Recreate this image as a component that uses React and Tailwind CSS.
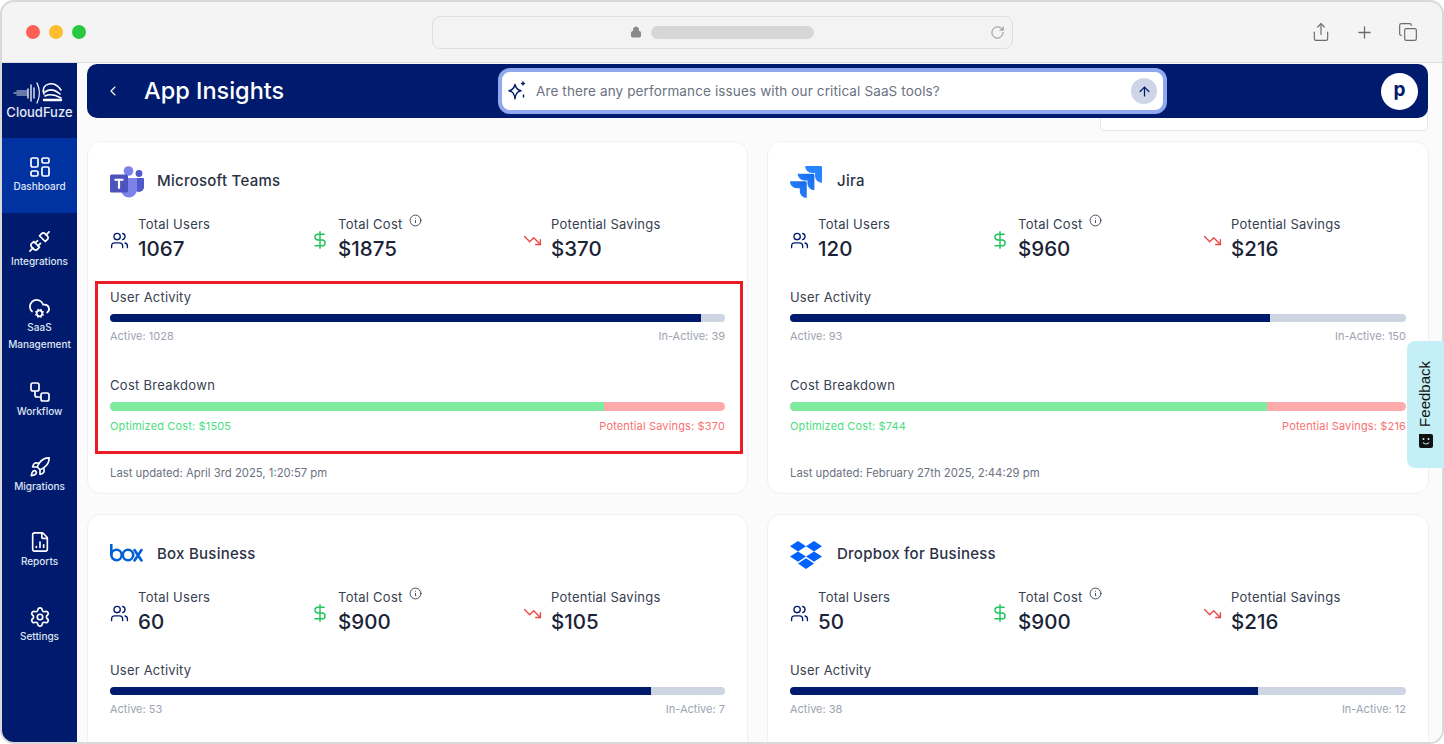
import React from "react";
import { ChevronLeft, Users, DollarSign, TrendingDown, Info, Unplug, CloudCog, Rocket, FileChartColumn, Settings, ArrowUp, Lock, RotateCw, Share, Plus, Copy } from "lucide-react";

const font = { fontFamily: "Inter, 'Liberation Sans', sans-serif" };

const DashIcon = () => (
  <svg width="22" height="22" viewBox="0 0 22 22" fill="none" stroke="currentColor" strokeWidth="1.7">
    <rect x="2" y="2" width="7" height="9" rx="1.6" />
    <rect x="13" y="2" width="7" height="5" rx="1.6" />
    <rect x="2" y="15" width="7" height="5" rx="1.6" />
    <rect x="13" y="11" width="7" height="9" rx="1.6" />
  </svg>
);

const WorkflowIcon = () => (
  <svg width="22" height="22" viewBox="0 0 22 22" fill="none" stroke="currentColor" strokeWidth="1.7">
    <rect x="2" y="2" width="8" height="8" rx="2" />
    <rect x="12" y="12" width="8" height="8" rx="2" />
    <path d="M6 10v4a2 2 0 0 0 2 2h4" />
  </svg>
);

const TeamsLogo = () => (
  <svg width="34" height="32" viewBox="0 0 34 32">
    <circle cx="29" cy="7.5" r="3.4" fill="#5059c9" />
    <path d="M23 12h10a1 1 0 0 1 1 1v8a5 5 0 0 1-5 5 6 6 0 0 1-6-6z" fill="#5059c9" />
    <circle cx="18.500" cy="5" r="4.800" fill="#7b83eb" />
    <path d="M11 12h15a1 1 0 0 1 1 1v10a8 8 0 0 1-16 1z" fill="#7b83eb" />
    <rect x="0" y="8.500" width="18" height="18" rx="1.500" fill="#4b53bc" />
    <path d="M4.500 12.800h9v2h-3.400v8h-2.200v-8h-3.400z" fill="#fff" />
  </svg>
);

const JiraLogo = () => (
  <svg width="32" height="32" viewBox="2 2 20 20">
    <defs>
      <linearGradient id="jiraFill" x1="1" y1="0" x2="0" y2="1">
        <stop offset="0" stopColor="#1668ec" />
        <stop offset="1" stopColor="#2f8bff" />
      </linearGradient>
    </defs>
    <path fill="#2684ff" d="M11.530 2c0 2.400 1.970 4.350 4.350 4.350h1.780v1.700c0 2.400 1.940 4.340 4.340 4.350V2.840a.84.84 0 0 0-.84-.84H11.530z" />
    <path fill="url(#jiraFill)" d="M6.770 6.800a4.362 4.362 0 0 0 4.340 4.340h1.800v1.720a4.362 4.362 0 0 0 4.340 4.340V7.630a.84.84 0 0 0-.83-.83H6.770z" />
    <path fill="url(#jiraFill)" d="M2 11.600c0 2.400 1.950 4.340 4.350 4.340h1.780v1.720c.01 2.390 1.950 4.340 4.340 4.340v-9.570a.84.84 0 0 0-.84-.84L2 11.600z" />
  </svg>
);

const BoxLogo = () => (
  <svg width="33" height="18" viewBox="0 0 33 18" className="mt-[-3px]" fill="none" stroke="#0061d5" strokeWidth="2.600">
    <path d="M1.300 0v11" />
    <circle cx="6.500" cy="11" r="5.200" />
    <circle cx="18" cy="11" r="5.200" />
    <path d="M24.500 6l7 10.500M31.500 6l-7 10.500" strokeLinecap="round" />
  </svg>
);

const DropboxLogo = () => (
  <svg width="32" height="28" viewBox="0 0 32 28" fill="#0061ff">
    <path d="M8 0l8 5.200-8 5.200-8-5.200zM24 0l8 5.200-8 5.200-8-5.200zM0 15.600l8-5.200 8 5.200-8 5.200zM24 10.400l8 5.200-8 5.200-8-5.200zM8 22.500l8-5.200 8 5.200-8 5.500z" />
  </svg>
);

const CloudFuzeMark = () => (
  <svg width="50" height="22" viewBox="0 0 50 22" className="mr-[3px]" fill="none" stroke="#fff" strokeWidth="1.300" strokeLinecap="round">
    <path d="M1 11h13M4 9h10M4 13h10" opacity=".55" />
    <path d="M15 7v9M18 3v16M21 6v10M24 1c3 6 3 14 0 20" />
    <path d="M31 12c-2-5 0-9 5-10 4-1 9 1 12 6" strokeWidth="1.600" />
    <path d="M32 10c4-3 9-3 15 2M32 14c4-2 9-2 16 2" strokeWidth="1.600" />
    <path d="M31 18h17" strokeWidth="2.400" />
  </svg>
);

const Sparkle = () => (
  <svg width="20" height="20" viewBox="0 0 20 20" fill="none" stroke="#001b6d" strokeWidth="1.400" strokeLinejoin="round">
    <path d="M8 3.500c.8 3.800 2.200 5.300 6 6.300-3.800 1-5.200 2.500-6 8-.8-5.500-2.200-7-6-8 3.800-1 5.200-2.500 6-6.300z" />
    <path d="M16 1v3M14.500 2.500h3M16.500 14v2" strokeLinecap="round" />
  </svg>
);

const navItems = [
  { label: ["Dashboard"], icon: <DashIcon />, active: true },
  { label: ["Integrations"], icon: <Unplug size={23} strokeWidth={1.8} /> },
  { label: ["SaaS", "Management"], icon: <CloudCog size={23} strokeWidth={1.8} /> },
  { label: ["Workflow"], icon: <WorkflowIcon /> },
  { label: ["Migrations"], icon: <Rocket size={22} strokeWidth={1.8} /> },
  { label: ["Reports"], icon: <FileChartColumn size={22} strokeWidth={1.8} /> },
  { label: ["Settings"], icon: <Settings size={22} strokeWidth={1.8} /> },
];

// the two lower cards run off the bottom of the window, only their top part is filled in
const apps = [
  { name: "Microsoft Teams", logo: <TeamsLogo />, users: 1067, cost: "$1875", savings: "$370", active: 1028, inactive: 39, activePct: 96.1, optimized: "$1505", costPct: 80.3, updated: "April 3rd 2025, 1:20:57 pm", marked: true },
  { name: "Jira", logo: <JiraLogo />, users: 120, cost: "$960", savings: "$216", active: 93, inactive: 150, activePct: 78, optimized: "$744", costPct: 77.5, updated: "February 27th 2025, 2:44:29 pm" },
  { name: "Box Business", logo: <BoxLogo />, users: 60, cost: "$900", savings: "$105", active: 53, inactive: 7, activePct: 88 },
  { name: "Dropbox for Business", logo: <DropboxLogo />, users: 50, cost: "$900", savings: "$216", active: 38, inactive: 12, activePct: 76 },
];

const Stat = ({ icon, label, value, info }) => (
  <div className="flex items-center">
    <div className="w-[28px] flex items-center">{icon}</div>
    <div>
      <div className="flex items-start gap-[6px] text-[13px] leading-[18px] text-[#374151] tracking-[0.25px]">
        {label}
        {info && <Info size={13} strokeWidth={1.5} className="text-[#1f2937] mt-[-1px]" />}
      </div>
      <div className="text-[20.500px] leading-[32px] font-medium text-[#1b2336]">{value}</div>
    </div>
  </div>
);

const AppCard = ({ app }) => (
  <div className="relative h-[353px] shrink-0 rounded-[14px] border border-[#f0f0f3] bg-white pl-[22px] pr-[22px] pt-[23px]">
    <div className="flex items-center h-[33px]">
      <div className="w-[47px] flex items-center">{app.logo}</div>
      <div className="text-[15px] font-medium text-[#2b3245] tracking-[0.25px]">{app.name}</div>
    </div>
    <div className="grid grid-cols-[200px_213px_1fr] mt-[17px] h-[50px]">
      <Stat icon={<Users size={19} strokeWidth={1.7} className="text-[#001b6d]" />} label="Total Users" value={app.users} />
      <div className="flex">
        <Stat icon={<DollarSign size={20} strokeWidth={1.8} className="text-[#22c55e]" />} label="Total Cost" value={app.cost} info />
      </div>
      <Stat icon={<TrendingDown size={19} strokeWidth={1.7} className="text-[#ef4444]" />} label="Potential Savings" value={app.savings} />
    </div>

    <div className="mt-[23px] text-[13px] leading-[18px] text-[#374151] tracking-[0.2px]">User Activity</div>
    <div className="flex h-[8px] mt-[8px] rounded-full overflow-hidden bg-[#cdd5e3]">
      <div className="bg-[#001b6d]" style={{ width: app.activePct + "%" }} />
    </div>
    <div className="flex justify-between mt-[6px] text-[11px] leading-[16px] text-[#9ca3af]">
      <span>Active: {app.active}</span>
      <span>In-Active: {app.inactive}</span>
    </div>

    {app.optimized && (
      <>
        <div className="mt-[32px] text-[13px] leading-[18px] text-[#374151] tracking-[0.3px]">Cost Breakdown</div>
        <div className="flex h-[9px] mt-[8px] rounded-full overflow-hidden bg-[#fdaaaa]">
          <div className="bg-[#7eeb9f]" style={{ width: app.costPct + "%" }} />
        </div>
        <div className="flex justify-between mt-[7px] text-[11px] leading-[16px] tracking-[0.15px]">
          <span className="text-[#4ade80]">Optimized Cost: {app.optimized}</span>
          <span className="text-[#f87171]">Potential Savings: {app.savings}</span>
        </div>
        <div className="mt-[31px] text-[11.300px] leading-[16px] text-[#6b7280]">Last updated: {app.updated}</div>
      </>
    )}

    {app.marked && (
      <div className="absolute left-[7px] right-[4px] top-[139px] h-[173px] border-[3px] border-[#ed1c24] pointer-events-none" />
    )}
  </div>
);

export default function App() {
  return (
    <div style={font} className="relative h-[744px] w-[1444px] overflow-hidden bg-white">
      <div className="flex h-[744px] flex-col overflow-hidden rounded-[14px] border-2 border-[#d9d9d9] bg-[#f4f4f4]">
        {/* browser bar */}
        <div className="relative flex h-[61px] shrink-0 items-center border-b border-[#dcdcdc]">
          <div className="ml-[24px] flex gap-[9px]">
            <span className="h-[14px] w-[14px] rounded-full bg-[#ff5f57]" />
            <span className="h-[14px] w-[14px] rounded-full bg-[#febc2e]" />
            <span className="h-[14px] w-[14px] rounded-full bg-[#28c840]" />
          </div>
          <div className="ml-[346px] flex h-[33px] w-[581px] items-center rounded-[8px] border border-[#dedede] bg-[#f3f3f3] pl-[197px] pr-[7px]">
            <Lock size={12} className="text-[#8a8a8a]" fill="#8a8a8a" />
            <div className="ml-[9px] h-[13px] w-[163px] rounded-full bg-[#d6d6d6]" />
            <RotateCw size={15} strokeWidth={1.2} className="ml-auto text-[#6b6b6b]" />
          </div>
          <div className="ml-auto mr-[24px] flex items-center gap-[24px] text-[#6b6b6b]">
            <Share size={20} strokeWidth={1.4} />
            <Plus size={19} strokeWidth={1.6} />
            <Copy size={20} strokeWidth={1.4} />
          </div>
        </div>

        <div className="flex min-h-0 flex-1">
          {/* sidebar */}
          <div className="w-[75px] shrink-0 bg-[#001b6d] text-white">
            <div className="flex h-[75px] flex-col items-center justify-center pt-[1px]">
              <CloudFuzeMark />
              <div className="mt-[1px] text-[13px] leading-[15px] font-medium text-[#e5e9f5]">CloudFuze</div>
            </div>
            {navItems.map((item) => (
              <div key={item.label[0]} className={`flex h-[75px] flex-col items-center justify-center pb-[2px] ${item.active ? "bg-[#0033a1]" : ""}`}>
                <div className="flex h-[24px] items-center">{item.icon}</div>
                <div className="mt-[-1px] text-center text-[10px] leading-[17px] font-medium text-[#dfe4f2]">
                  {item.label.map((l) => (
                    <div key={l}>{l}</div>
                  ))}
                </div>
              </div>
            ))}
          </div>

          {/* main */}
          <div className="relative min-w-0 flex-1 overflow-hidden bg-[#fbfbfc] pl-[10px] pr-[13px] pt-[1px]">
            <div className="absolute right-[14px] top-[40px] h-[28px] w-[328px] rounded-b-[4px] border border-[#e5e7eb] bg-white" />
            <div className="relative mr-[1px] flex h-[54px] items-center rounded-[10px] bg-[#001b6d] text-white">
              <ChevronLeft size={16} strokeWidth={1.6} className="ml-[18px]" />
              <div className="ml-[23px] w-[354px] text-[23.500px] font-medium">App Insights</div>
              <div className="flex h-[46px] w-[669px] items-center rounded-[12px] border-[4px] border-[#8fa8ee] bg-white pl-[5px] pr-[6px]">
                <Sparkle />
                <span className="ml-[9px] text-[13.500px] tracking-[0.13px] text-[#6b7280]">Are there any performance issues with our critical SaaS tools?</span>
                <div className="ml-auto flex h-[26px] w-[26px] items-center justify-center rounded-full bg-[#cdd5e6]">
                  <ArrowUp size={15} strokeWidth={2} className="text-[#001b6d]" />
                </div>
              </div>
              <div className="ml-auto mr-[10px] flex h-[37px] w-[37px] items-center justify-center rounded-full bg-white pb-[1px] text-[19px] font-bold text-[#001b6d]">p</div>
            </div>

            <div className="relative mt-[23px] grid grid-cols-[661px_662px] gap-x-[19px] gap-y-[20px]">
              {apps.map((app) => (
                <AppCard key={app.name} app={app} />
              ))}
            </div>
          </div>
        </div>
      </div>

      {/* feedback tab */}
      <div className="absolute right-0 top-[341px] flex h-[127px] w-[37px] flex-col items-center justify-center gap-[8px] rounded-l-[8px] bg-[#c4eff6]">
        <span style={{ fontFamily: "'Liberation Sans', sans-serif" }} className="rotate-180 text-[15px] text-[#111] [writing-mode:vertical-rl]">Feedback</span>
        <svg width="14" height="14" viewBox="0 0 14 14">
          <path d="M0 0h12a2 2 0 0 1 2 2v10a2 2 0 0 1-2 2H2a2 2 0 0 1-2-2z" fill="#111" />
          <circle cx="4.500" cy="5" r="1" fill="#c4eff6" />
          <circle cx="9.500" cy="5" r="1" fill="#c4eff6" />
          <path d="M4 8.500c1.500 2 4.500 2 6 0" fill="none" stroke="#c4eff6" strokeWidth="1.200" />
        </svg>
      </div>
    </div>
  );
}
